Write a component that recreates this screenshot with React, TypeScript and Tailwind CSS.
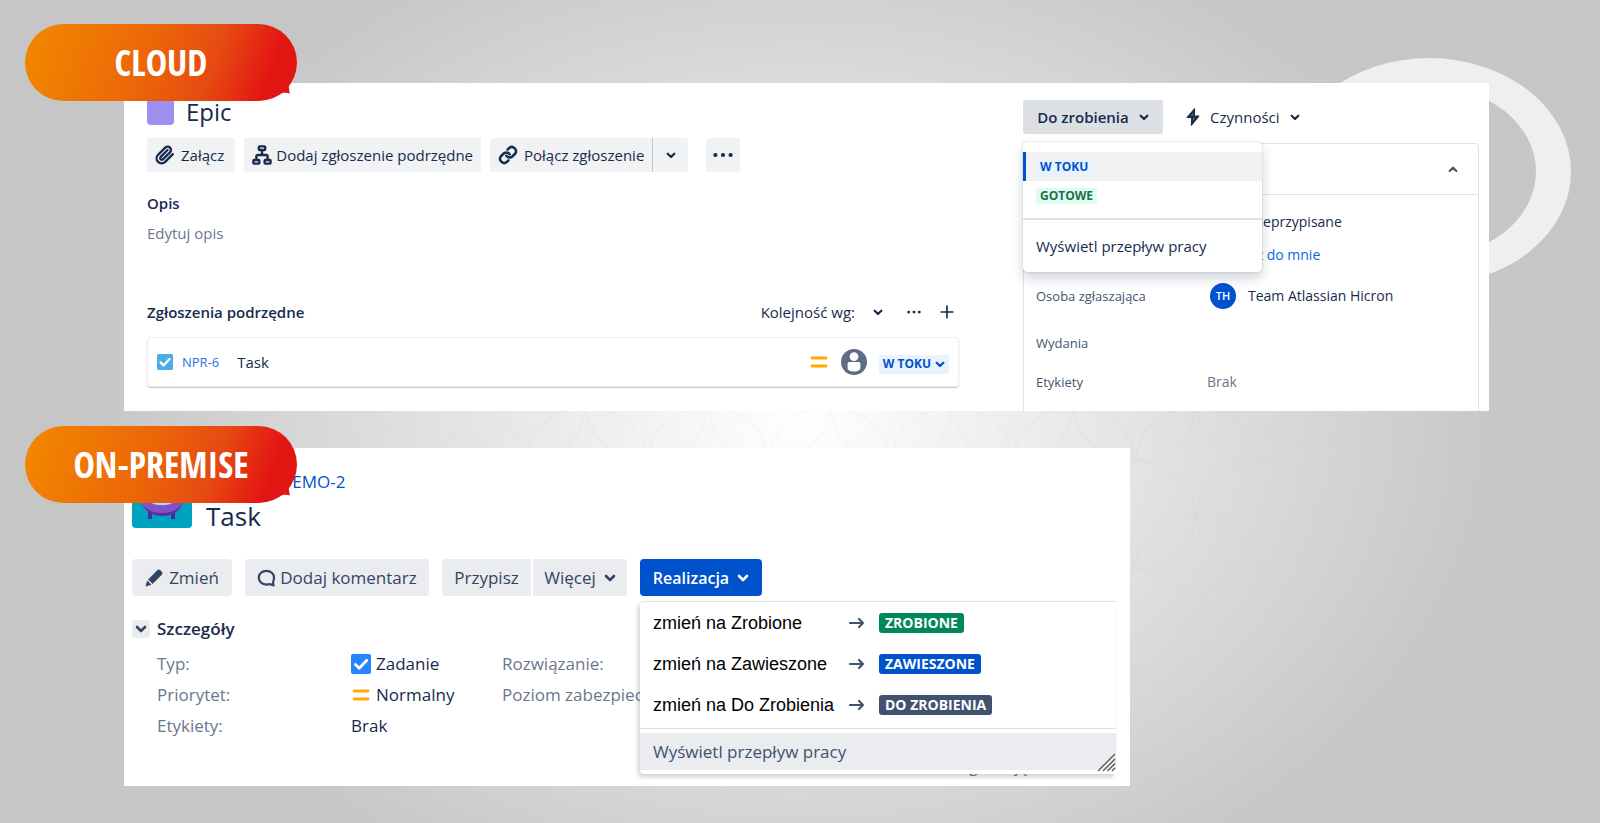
import { LuPlus } from "react-icons/lu";

const statuses = [
  { action: "zmień na Zrobione", label: "ZROBIONE", color: "bg-[#00875a]" },
  { action: "zmień na Zawieszone", label: "ZAWIESZONE", color: "bg-[#0052cc]" },
  { action: "zmień na Do Zrobienia", label: "DO ZROBIENIA", color: "bg-[#42526e]" },
]

const Chevron = ({ className = "w-[10px]" }: { className?: string }) => (
  <svg className={className} viewBox="0 0 12 8" fill="none" stroke="currentColor" strokeWidth="2.6" strokeLinecap="round" strokeLinejoin="round">
    <path d="M2 2l4 4 4-4" />
  </svg>
)

const ClipIcon = () => (
  <svg width="20" height="20" viewBox="0 0 24 24" fill="none" stroke="currentColor" strokeWidth="2.8" strokeLinecap="round" strokeLinejoin="round">
    <path d="m21.4 11-9.2 9.2a6 6 0 0 1-8.5-8.5l8.6-8.6a4 4 0 1 1 5.7 5.7l-8.6 8.5a2 2 0 0 1-2.8-2.8l8.5-8.5" />
  </svg>
)

const LinkIcon = () => (
  <svg width="20" height="20" viewBox="0 0 24 24" fill="none" stroke="currentColor" strokeWidth="3" strokeLinecap="round" strokeLinejoin="round">
    <path d="M10 13a5 5 0 0 0 7.5.5l3-3a5 5 0 0 0-7-7l-2 2" />
    <path d="M14 11a5 5 0 0 0-7.5-.5l-3 3a5 5 0 0 0 7 7l2-2" />
  </svg>
)

const HierarchyIcon = () => (
  <svg width="20" height="20" viewBox="0 0 20 20" fill="none" stroke="currentColor" strokeWidth="2.4" strokeLinejoin="round">
    <rect x="6.8" y="1.4" width="6.4" height="3.6" rx="1" />
    <rect x="1.4" y="15" width="6" height="3.6" rx="1" />
    <rect x="12.6" y="15" width="6" height="3.6" rx="1" />
    <path d="M10 5v5M4.4 15v-3.4a1.6 1.6 0 0 1 1.6-1.6h8a1.6 1.6 0 0 1 1.6 1.6V15" />
  </svg>
)

const DotsIcon = ({ className }: { className: string }) => (
  <svg className={className} viewBox="0 0 20 6" fill="currentColor">
    <circle cx="2.4" cy="3" r="2.1" />
    <circle cx="10" cy="3" r="2.1" />
    <circle cx="17.6" cy="3" r="2.1" />
  </svg>
)

const BoltIcon = () => (
  <svg width="14" height="18" viewBox="0 0 14 18">
    <path d="M8.6.8 1.2 9.4h4.6l-.4 7.8 7.4-9H8.2z" fill="#172b4d" stroke="#172b4d" strokeWidth="1.2" strokeLinejoin="round" />
    <path d="M7.2 4.6 4.4 8h2.7zM7 9.8h2.5l-2.7 3.4z" fill="#fff" opacity=".25" />
  </svg>
)

const PencilIcon = () => (
  <svg width="18" height="18" viewBox="0 0 18 18" fill="#344563">
    <path d="M12.3 1.2a2.2 2.2 0 0 1 3 0l1.5 1.5a2.2 2.2 0 0 1 0 3L7.6 14.9 3.1 10.4z" />
    <path d="m2.2 11.5 4.3 4.3-5 1.5a.6.6 0 0 1-.8-.8z" />
  </svg>
)

const CommentIcon = () => (
  <svg width="19" height="18" viewBox="0 0 19 18" fill="none" stroke="#344563" strokeWidth="2.2" strokeLinejoin="round">
    <path d="M9.4 1.8c4.4 0 7.6 2.9 7.6 6.8 0 2-.4 3.4-1 4.6l.6 3.2-4-1.3c-1 .4-2 .5-3.200.5C5 15.6 1.8 12.5 1.8 8.6S5 1.800 9.400 1.800z" />
  </svg>
)

const TaskIcon = ({ className }: { className: string }) => (
  <svg className={className} viewBox="0 0 20 20">
    <rect width="20" height="20" rx="2" fill="currentColor" />
    <path d="m4.5 10.5 3.7 3.7 7.6-8" fill="none" stroke="#fff" strokeWidth="2.8" strokeLinecap="round" strokeLinejoin="round" />
  </svg>
)

const PriorityIcon = () => (
  <svg width="18" height="14" viewBox="0 0 18 14" stroke="#ffab00" strokeWidth="2.8" strokeLinecap="round">
    <path d="M2 3h14M2 11h14" />
  </svg>
)

const UserIcon = () => (
  <svg width="26" height="26" viewBox="0 0 26 26">
    <circle cx="13" cy="13" r="13" fill="#5e6c84" />
    <circle cx="13" cy="7.6" r="4.4" fill="#fff" />
    <path d="M6.6 14.8a1.8 1.8 0 0 1 1.8-1.8h9.2a1.8 1.8 0 0 1 1.8 1.8V19c0 2-2.4 3.5-6.4 3.5S6.6 21 6.6 19z" fill="#fff" />
  </svg>
)

const ProjectAvatar = () => (
  <svg width="60" height="60" viewBox="0 0 60 60">
    <rect width="60" height="60" rx="4" fill="#00a3bf" />
    <path d="M18 43v8M41 43v8" stroke="#403294" strokeWidth="4" />
    <path d="M9 30h43c-1 10-9 18-22 18S10 40 9 30z" fill="#5e2ca5" />
    <path d="M7 25h46c0 13-10 20-23 20S7 38 7 25z" fill="#8350c8" />
    <path d="M19 33c5 4 17 4 22 0" stroke="#b3d4ff" strokeWidth="2.5" fill="none" />
  </svg>
)

const Backdrop = () => (
  <svg className="absolute inset-0 h-full w-full" viewBox="0 0 1600 823" preserveAspectRatio="none">
    <defs>
      <pattern id="rings" width="122" height="108" patternUnits="userSpaceOnUse" x="1074" y="461">
        <g fill="none" stroke="#000" strokeOpacity=".014" strokeWidth="2">
          <ellipse cx="61" cy="54" rx="60" ry="54" />
          <ellipse cx="0" cy="108" rx="60" ry="54" />
          <ellipse cx="122" cy="108" rx="60" ry="54" />
        </g>
      </pattern>
      <radialGradient id="fade">
        <stop offset=".5" stopColor="#fff" />
        <stop offset="1" stopColor="#000" />
      </radialGradient>
      <mask id="center">
        <ellipse cx="850" cy="420" rx="560" ry="380" fill="url(#fade)" />
      </mask>
    </defs>
    <rect width="1600" height="823" fill="url(#rings)" mask="url(#center)" />
    <path fill="#efefef" fillRule="evenodd" d="M1287 171.5a142 113.5 0 1 0 284 0a142 113.5 0 1 0-284 0zM1322 171.5a107 85.5 0 1 0 214 0a107 85.5 0 1 0-214 0z" />
  </svg>
)

const Badge = ({ children }: { children: string }) => (
  <div className="absolute -left-[99px] z-20 flex h-[77px] w-[272px] items-center justify-center rounded-full bg-[linear-gradient(110deg,#f28500_5%,#ec6608_45%,#e64a12_68%,#e31513_88%)]">
    <span className="font-['Open_Sans_Condensed',sans-serif] text-4xl font-bold text-white">{children}</span>
    <svg className="absolute right-1 bottom-1.5 h-4 w-4" viewBox="0 0 16 16" fill="#e31513">
      <path d="M0 9 12 0c-1 4 0 9 .8 14.500C9 13 5 14 2 15z" />
    </svg>
  </div>
)

const CloudPanel = () => {
  return <section className="relative mr-[111px] ml-[124px] flex gap-16 bg-white text-[15px] leading-5 text-[#172b4d]">
    <div className="absolute -top-[59px] left-0"><Badge>CLOUD</Badge></div>
    <div className="flex-1 pt-[15px] pb-6 pl-[23px]">
      <div className="flex items-center gap-3">
        <span className="h-[27px] w-[27px] rounded bg-[#9f8fef]"></span>
        <h2 className="text-2xl leading-[27px]">Epic</h2>
      </div>
      <div className="mt-[13px] flex">
        <button className="mr-[9px] flex h-[34px] items-center gap-1.5 rounded-xs bg-[#f1f2f4] pr-[11px] pl-2">
          <ClipIcon />
          Załącz
        </button>
        <button className="mr-[9px] flex h-[34px] items-center gap-1 rounded-xs bg-[#f1f2f4] px-2">
          <HierarchyIcon />
          Dodaj zgłoszenie podrzędne
        </button>
        <button className="flex h-[34px] items-center gap-1.5 rounded-l-xs bg-[#f1f2f4] px-2">
          <LinkIcon />
          Połącz zgłoszenie
        </button>
        <button aria-label="Więcej opcji łączenia" className="mr-[18px] flex h-[34px] w-9 items-center justify-center rounded-r-xs border-l border-[#c1c7d0] bg-[#f1f2f4]">
          <Chevron />
        </button>
        <button aria-label="Więcej" className="flex h-[34px] w-[34px] items-center justify-center rounded-xs bg-[#f1f2f4]">
          <DotsIcon className="w-5" />
        </button>
      </div>
      <h3 className="mt-[21px] font-semibold">Opis</h3>
      <p className="mt-[10px] text-[#6b778c]">Edytuj opis</p>
      <div className="mt-[59px] flex items-center">
        <h3 className="flex-1 font-semibold">Zgłoszenia podrzędne</h3>
        <button className="flex items-center gap-[18px]">
          Kolejność wg:
          <Chevron />
        </button>
        <button aria-label="Więcej działań" className="ml-6"><DotsIcon className="w-[14px]" /></button>
        <button aria-label="Dodaj" className="mr-0.5 ml-4"><LuPlus className="text-xl" /></button>
      </div>
      <div className="mt-[15px] flex h-[50px] items-center rounded-sm border border-[#ebecf0] px-[9px] shadow-[0_1px_1px_#091e4240]">
        <TaskIcon className="h-4 w-4 text-[#4bade8]" />
        <a href="#" className="ml-[9px] text-[13px] text-[#2b74dc]">NPR-6</a>
        <span className="ml-[18px] flex-1">Task</span>
        <PriorityIcon />
        <span className="mr-3 ml-[13px]"><UserIcon /></span>
        <button className="mt-1 flex h-[19px] items-center gap-1 rounded-xs bg-[#e9f2ff] px-1 text-xs font-bold text-[#0052cc]">
          W TOKU
          <Chevron />
        </button>
      </div>
    </div>
    <div className="mr-[10px] flex w-[456px] flex-col pt-[17px]">
      <div className="flex gap-[23px]">
        <button className="flex h-[34px] w-[140px] items-center justify-center gap-[10px] rounded-xs bg-[#dcdfe4] font-semibold">
          Do zrobienia
          <Chevron />
        </button>
        <button className="flex items-center gap-[10px]">
          <BoltIcon />
          Czynności
          <Chevron />
        </button>
      </div>
      <div className="relative mt-[9px] flex-1 rounded-t border border-b-0 border-[#dfe1e6]">
        <div className="flex h-[51px] items-center justify-end border-b border-[#dfe1e6] pr-5">
          <button aria-label="Zwiń" className="text-[#44546f]"><Chevron className="w-[10px] rotate-180" /></button>
        </div>
        <dl className="grid grid-cols-[171px_1fr] items-center px-3 pt-[17px] text-sm leading-5">
          <dt className="text-[13px] text-[#44546f]">Osoba przypisana</dt>
          <dd className="pl-[42px]">Nieprzypisane</dd>
          <dd className="col-start-2 mt-[13px] pl-[3px]"><a href="#" className="text-[#0c66e4]">Przypisz do mnie</a></dd>
          <dt className="mt-[18px] text-[13px] text-[#44546f]">Osoba zgłaszająca</dt>
          <dd className="mt-[18px] flex items-center gap-3 pl-[3px]">
            <span className="flex h-[26px] w-[26px] items-center justify-center rounded-full bg-[#0052cc] text-[11px] font-semibold text-white">TH</span>
            Team Atlassian Hicron
          </dd>
          <dt className="mt-6 text-[13px] text-[#44546f]">Wydania</dt>
          <dd></dd>
          <dt className="mt-[19px] text-[13px] text-[#44546f]">Etykiety</dt>
          <dd className="mt-[19px] text-[#6b778c]">Brak</dd>
        </dl>
        {/* status menu */}
        <div className="absolute -top-0.5 -left-px z-10 w-[239px] rounded-sm bg-white pt-[10px] shadow-[0_0_1px_#091e4280,0_6px_12px_#091e4233]">
          <button className="flex h-[29px] w-full items-center border-l-3 border-[#0052cc] bg-[#f1f2f4] pl-[10px]">
            <span className="rounded-xs bg-[#e9f2ff] px-1 text-xs leading-4 font-bold text-[#0052cc]">W TOKU</span>
          </button>
          <button className="flex h-[30px] w-full items-center pl-[13px]">
            <span className="rounded-xs bg-[#dffcf0] px-1 text-xs leading-4 font-bold text-[#216e4e]">GOTOWE</span>
          </button>
          <button className="mt-[7px] flex h-[54px] w-full items-center border-t-2 border-[#dfe1e6] pl-[13px]">Wyświetl przepływ pracy</button>
        </div>
      </div>
    </div>
  </section>
}

const OnPremisePanel = () => {
  return <section className="relative mt-[37px] mr-[470px] ml-[124px] bg-white px-2 pt-5 pb-1.5 text-[17px] leading-6 text-[#172b4d]">
    <div className="absolute -top-[22px] left-0"><Badge>ON-PREMISE</Badge></div>
    <div className="flex gap-3.5">
      <ProjectAvatar />
      <div className="pt-0.5">
        <a href="#" className="ml-[74px] text-[#0052cc]">DEMO-2</a>
        <h2 className="mt-1.5 text-[26px] leading-8">Task</h2>
      </div>
    </div>
    <div className="mt-[27px] flex gap-[13px] text-[#344563]">
      <button className="flex h-[37px] w-[100px] items-center justify-center gap-1.5 rounded-sm bg-[#ebecf0]">
        <PencilIcon />
        Zmień
      </button>
      <button className="flex h-[37px] w-[184px] items-center justify-center gap-1 rounded-sm bg-[#ebecf0]">
        <CommentIcon />
        Dodaj komentarz
      </button>
      <div className="flex gap-0.5">
        <button className="h-[37px] w-[89px] rounded-l-sm bg-[#ebecf0]">Przypisz</button>
        <button className="flex h-[37px] w-[94px] items-center justify-center gap-2 rounded-r-sm bg-[#ebecf0]">
          Więcej
          <Chevron className="w-3" />
        </button>
      </div>
      <div className="relative">
        <button className="flex h-[37px] w-[122px] items-center justify-center gap-2 rounded-sm bg-[#0052cc] text-base font-semibold text-white">
          Realizacja
          <Chevron className="w-3" />
        </button>
        <div className="absolute top-[42px] left-0 z-10 w-[476px] rounded-l-sm border-t border-[#dfe1e6] bg-white pb-1 shadow-[-2px_3px_4px_#091e4233]">
          {statuses.map((s) => (
            <button key={s.label} className="flex h-[41px] w-full items-center pl-[13px] font-['Liberation_Sans',sans-serif] text-lg text-black">
              <span className="w-[195px] text-left">{s.action}</span>
              <svg width="18" height="14" viewBox="0 0 18 14" fill="none" stroke="#42526e" strokeWidth="2.2" strokeLinecap="round" strokeLinejoin="round">
                <path d="M2 7h13M11 3l4 4-4 4" />
              </svg>
              <span className={`${s.color} ml-[13px] rounded-[3px] px-1.5 font-['Open_Sans',sans-serif] text-sm leading-5 font-bold text-white`}>{s.label}</span>
            </button>
          ))}
          <div className="mt-[3px] border-t border-[#dfe1e6] pt-1">
            <button className="h-[37px] w-full bg-[#ebecf0] pl-[13px] text-left text-[#42526e]">Wyświetl przepływ pracy</button>
          </div>
          <svg className="absolute right-0 bottom-0.5" width="19" height="19" viewBox="0 0 19 19" stroke="#555" strokeWidth="1.3">
            <path d="M1 18 18 1M6 18 18 6M10.5 18l7.5-7.5M15 18l3-3" />
          </svg>
        </div>
      </div>
    </div>
    <div className="mt-[21px] flex items-center gap-[7px]">
      <button aria-label="Zwiń szczegóły" className="flex h-[18px] w-[18px] items-center justify-center rounded-[3px] bg-[#ebecf0] text-[#344563]">
        <Chevron className="w-3" />
      </button>
      <h3 className="font-semibold">Szczegóły</h3>
    </div>
    <dl className="mt-[7px] grid grid-cols-[194px_151px_200px] pl-[25px] leading-[31px] whitespace-nowrap">
      <dt className="text-[#6b778c]">Typ:</dt>
      <dd className="flex items-center gap-[5px]"><TaskIcon className="h-5 w-5 text-[#2684ff]" />Zadanie</dd>
      <dt className="text-[#6b778c]">Rozwiązanie:</dt>
      <dt className="text-[#6b778c]">Priorytet:</dt>
      <dd className="flex items-center gap-[6px] pl-px"><PriorityIcon />Normalny</dd>
      <dt className="text-[#6b778c]">Poziom zabezpieczeń:</dt>
      <dt className="text-[#6b778c]">Etykiety:</dt>
      <dd>Brak</dd>
    </dl>
    <p className="mt-[13px] mb-0.5 ml-auto w-[213px] text-base leading-6 text-[#6b778c]">Osoba zgłaszająca:</p>
  </section>
}

const App = () => {
  return <main className="relative min-h-screen bg-[#c6c6c6] bg-[radial-gradient(ellipse_710px_530px_at_50%_51%,#fff,#c6c6c6)] pt-[83px] pb-9 font-['Open_Sans','Noto_Sans',sans-serif]">
    <Backdrop />
    <CloudPanel />
    <OnPremisePanel />
  </main>
}
export default App;
